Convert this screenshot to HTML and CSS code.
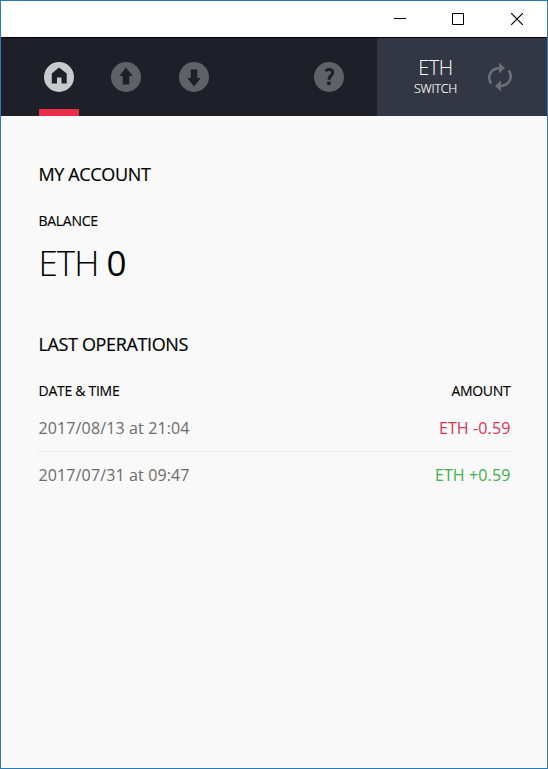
FILE: index.html
```html
<!DOCTYPE html>
<html lang="en">
<head>
<meta charset="utf-8">
<title>Wallet</title>
<link rel="stylesheet" href="styles.css">
</head>
<body>
<div class="window">
  <header class="titlebar">
    <svg class="control" viewBox="0 0 12 12"><path d="M0 5.5h12"/></svg>
    <svg class="control" viewBox="0 0 12 12"><path d="M.5.5h11v11H.5z"/></svg>
    <svg class="control close" viewBox="0 0 12 12"><path d="M0 0l12 12M12 0L0 12"/></svg>
  </header>
  <nav class="nav">
    <a class="tab active"><svg class="icon" viewBox="0 0 30 30"><circle cx="15" cy="15" r="15"/><path d="M15 5.500 22.700 11.500v10h-5.200V15.500h-4.500v6H7.800v-10z"/></svg></a>
    <a class="tab"><svg class="icon" viewBox="0 0 30 30"><circle cx="15" cy="15" r="15"/><path d="M15 5.500 21.800 14H18.300v8.500h-6.600V14H8.200z"/></svg></a>
    <a class="tab"><svg class="icon" viewBox="0 0 30 30"><circle cx="15" cy="15" r="15"/><path d="M15 24.500 8.200 16H11.700V7.500h6.600V16h3.500z"/></svg></a>
    <a class="tab help"><svg class="icon" viewBox="0 0 30 30"><circle cx="15" cy="15" r="15"/><path class="hook" d="M11.500 9.200C13.500 6.500 18.700 6.800 18.700 10.400C18.700 13.500 15 13.500 15 17.800"/><path d="M13.200 19.600h3.500v3.400h-3.500z"/></svg></a>
    <div class="switch">
      <div class="coin"><span class="code">ETH</span><span class="label">SWITCH</span></div>
      <svg class="sync" viewBox="0 0 24 30"><path class="arc" d="M3.200 21.500C-1.500 14.500 3 6.200 12 6M20.800 8.500C25.500 15.500 21 23.800 12 24"/><path class="head" d="M11 .500 17 6 11 11.500zM13 18.500 7 24l6 5.500z"/></svg>
    </div>
  </nav>
  <main class="content">
    <h1 class="title">MY ACCOUNT</h1>
    <h2 class="subtitle balance-label">BALANCE</h2>
    <p class="balance"><span class="unit">ETH</span> <span class="value">0</span></p>
    <h1 class="title operations">LAST OPERATIONS</h1>
    <div class="row head-row"><h2 class="subtitle">DATE &amp; TIME</h2><h2 class="subtitle">AMOUNT</h2></div>
    <div class="row item"><span>2017/08/13 at 21:04</span><span class="amount out">ETH -0.59</span></div>
    <div class="row item"><span>2017/07/31 at 09:47</span><span class="amount in">ETH +0.59</span></div>
  </main>
</div>
</body>
</html>
```
FILE: styles.css
```css
* { box-sizing: border-box; margin: 0; padding: 0; }
body { font-family: "Open Sans", sans-serif; color: #000; }
.window { width: 548px; height: 769px; border: 1px solid #2b7bb9; background: #f9f9f9; display: flex; flex-direction: column; overflow: hidden; }
.titlebar { height: 37px; flex: none; background: #fff; border-bottom: 1px solid #000; display: flex; justify-content: flex-end; align-items: center; gap: 46px; padding-right: 24px; }
.control { width: 12px; height: 12px; fill: none; stroke: #000; stroke-width: 1; }
.control.close { stroke-width: 1.2; margin-left: 1px; }
.nav { height: 78px; flex: none; background: #1e2029; display: flex; padding-left: 38px; }
.tab { width: 40px; height: 78px; margin-right: 28px; display: flex; flex-direction: column; align-items: center; padding-top: 24px; }
.tab.active { border-bottom: 7px solid #ea2b4a; margin-right: 27px; }
.tab.help { margin-left: auto; }
.icon { width: 30px; height: 30px; display: block; flex: none; fill: #1e2029; }
.icon circle { fill: #606166; }
.active .icon circle { fill: #c9cacc; }
.icon .hook { fill: none; stroke: #1e2029; stroke-width: 3; }
.switch { width: 170px; background: #333643; display: flex; padding-left: 37px; color: #fff; }
.coin { width: 43px; display: flex; flex-direction: column; align-items: center; padding-top: 18px; white-space: nowrap; }
.code { font-size: 20px; line-height: 24px; font-weight: 300; letter-spacing: -0.400px; }
.label { margin-top: 1px; font-size: 12.500px; line-height: 16px; font-weight: 300; letter-spacing: -0.250px; -webkit-text-stroke: 0.150px #fff; }
.sync { width: 24px; height: 30px; margin: 24px 0 0 30.500px; }
.sync .arc { fill: none; stroke: #6c6e77; stroke-width: 2.600; }
.sync .head { fill: #6c6e77; }
.content { padding: 46px 36.500px 0 37.500px; }
.title { font-size: 18px; line-height: 24px; font-weight: 500; letter-spacing: -0.360px; -webkit-text-stroke: 0.180px #000; }
.subtitle { font-size: 14px; line-height: 20px; font-weight: 500; letter-spacing: -0.280px; -webkit-text-stroke: 0.150px #000; }
.balance-label { margin-top: 25px; }
.balance { margin-top: 10px; font-size: 35px; line-height: 44px; letter-spacing: -1px; }
.unit { font-weight: 300; }
.operations { margin-top: 47px; }
.row { display: flex; justify-content: space-between; }
.head-row { margin-top: 25px; margin-bottom: 4px; }
.item { height: 47px; line-height: 46px; font-size: 16px; letter-spacing: 0.130px; color: #6b6b6b; border-bottom: 1px solid #ededed; }
.item:last-child { border-bottom: 0; }
.amount.out { color: #dc3354; }
.amount.in { color: #3fae4d; }
```
